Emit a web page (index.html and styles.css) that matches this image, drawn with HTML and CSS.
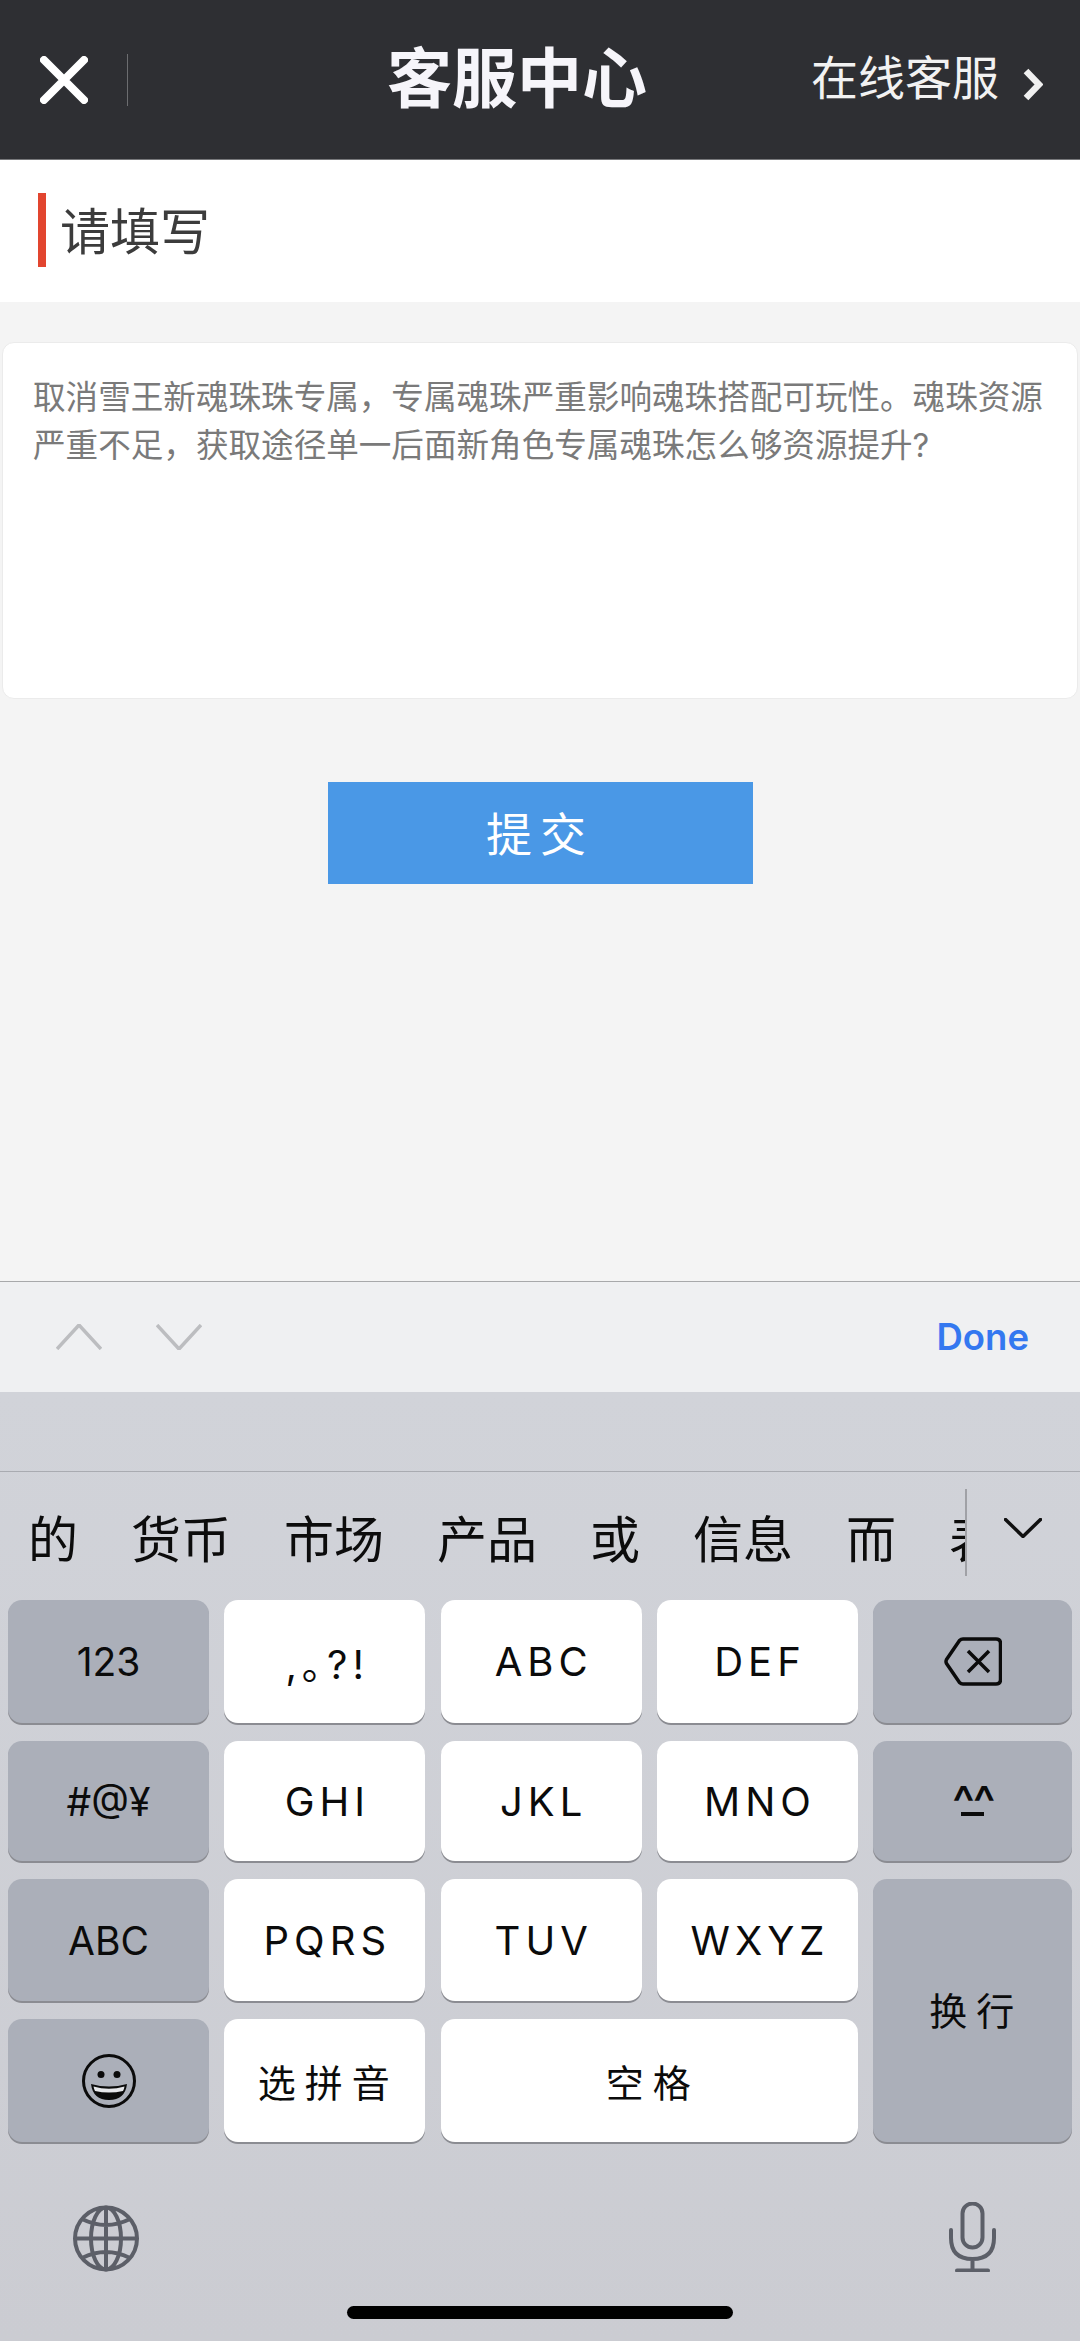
FILE: index.html
```html
<!DOCTYPE html>
<html lang="zh-CN">
<head>
    <meta charset="UTF-8">
    <meta name="viewport" content="width=device-width, initial-scale=1.0">
    <title>客服中心</title>
    <link rel="stylesheet" href="styles.css">
</head>
<body>
    <div class="page">
        <header class="topbar">
            <div class="topbar-left">
                <svg class="icon-close" viewBox="0 0 48 48"><path d="M4 4 L44 44 M44 4 L4 44"/></svg>
                <span class="topbar-divider"></span>
            </div>
            <h1 class="topbar-title">客服中心</h1>
            <div class="topbar-right">
                <span>在线客服</span>
                <svg class="icon-next" viewBox="0 0 21 33"><path d="M4 3 L17 16.5 L4 30"/></svg>
            </div>
        </header>

        <main class="content">
            <div class="section-title"><span>请填写</span></div>
            <div class="feedback-box">取消雪王新魂珠珠专属，专属魂珠严重影响魂珠搭配可玩性。魂珠资源严重不足，获取途径单一后面新角色专属魂珠怎么够资源提升?</div>
            <button class="submit-btn">提交</button>
        </main>

        <div class="form-toolbar">
            <svg class="icon-arrow" viewBox="0 0 46 26"><path d="M1 25 L23 1 L45 25"/></svg>
            <svg class="icon-arrow" viewBox="0 0 46 26"><path d="M1 1 L23 25 L45 1"/></svg>
            <span class="done">Done</span>
        </div>

        <div class="keyboard">
            <div class="pinyin-strip"></div>
            <div class="candidates">
                <div class="candidate-list">
                    <span>的</span>
                    <span>货币</span>
                    <span>市场</span>
                    <span>产品</span>
                    <span>或</span>
                    <span>信息</span>
                    <span>而</span>
                    <span>表</span>
                </div>
                <svg class="icon-more" viewBox="0 0 38 20"><path d="M1.5 1.5 L19 18.5 L36.5 1.5"/></svg>
            </div>

            <div class="keys">
                <div class="key dark num">123</div>
                <div class="key">,｡?!</div>
                <div class="key">ABC</div>
                <div class="key">DEF</div>
                <div class="key dark">
                    <svg class="icon-backspace" viewBox="0 0 58 49">
                        <path d="M19 2 H52 Q56.5 2 56.5 6.5 V42.5 Q56.5 47 52 47 H19 Q17 47 15.500 45.500 L2.500 26.500 Q1.500 24.500 2.500 22.500 L15.500 3.500 Q17 2 19 2 Z"/>
                        <path d="M24 14 L45 35 M45 14 L24 35"/>
                    </svg>
                </div>

                <div class="key dark num">#@¥</div>
                <div class="key">GHI</div>
                <div class="key">JKL</div>
                <div class="key">MNO</div>
                <div class="key dark">
                    <div class="kaomoji"><span class="kaomoji-eyes">^^</span><span class="kaomoji-mouth"></span></div>
                </div>

                <div class="key dark num">ABC</div>
                <div class="key">PQRS</div>
                <div class="key">TUV</div>
                <div class="key">WXYZ</div>
                <div class="key dark cjk key-return">换行</div>

                <div class="key dark">
                    <svg class="icon-emoji" viewBox="0 0 54 54">
                        <circle class="face" cx="27" cy="27" r="25.500"/>
                        <circle class="eye" cx="19" cy="20.500" r="3.500"/>
                        <circle class="eye" cx="35" cy="20.500" r="3.500"/>
                        <path class="mouth" d="M9 30 Q27 35 45 30 Q43 46 27 46 Q11 46 9 30 Z"/>
                        <path class="teeth" d="M11.500 32.500 Q27 37 42.500 32.500 Q42 35.500 41 37 Q27 40 13 37 Q12 35 11.500 32.500 Z"/>
                    </svg>
                </div>
                <div class="key cjk">选拼音</div>
                <div class="key cjk key-space">空格</div>
            </div>

            <div class="kb-bottom">
                <svg class="icon-globe" viewBox="0 0 66 67">
                    <circle cx="33" cy="33.500" r="31"/>
                    <ellipse cx="33" cy="33.500" rx="15" ry="31"/>
                    <path d="M33 2.500 V64.500 M2 33.500 H64 M9 14 Q33 26 57 14 M9 53 Q33 41 57 53"/>
                </svg>
                <svg class="icon-mic" viewBox="0 0 47 70">
                    <rect x="13.500" y="1.500" width="20" height="44" rx="10"/>
                    <path d="M2 28 V36 Q2 57 23.500 57 Q45 57 45 36 V28 M23.500 57 V68 M8 68.500 H39"/>
                </svg>
            </div>
            <div class="home-bar"></div>
        </div>
    </div>
</body>
</html>
```

FILE: styles.css
```css
/* General Styles */
* {
    box-sizing: border-box;
}

body {
    margin: 0;
    padding: 0;
    font-family: Inter, "Noto Sans CJK SC", sans-serif;
    background: #f4f4f4;
}

.page {
    display: flex;
    flex-direction: column;
    width: 1080px;
    height: 2341px;
    overflow: hidden;
}

/* Top bar */
.topbar {
    display: flex;
    align-items: center;
    flex-shrink: 0;
    height: 160px;
    padding-right: 37px;
    background: #2e2f33;
    border-bottom: 1px solid #77787b;
    color: #fff;
}

.topbar-left {
    display: flex;
    align-items: center;
    width: 387px;
    padding-left: 40px;
}

.icon-close {
    width: 48px;
    height: 48px;
    fill: none;
    stroke: #fff;
    stroke-width: 8;
    stroke-linecap: round;
}

.topbar-divider {
    width: 1px;
    height: 52px;
    margin-left: 39px;
    background: #6c6d70;
}

.topbar-title {
    margin: 0 0 3px;
    font-size: 65px;
    font-weight: 700;
    line-height: 1;
    color: #f6f5fa;
}

.topbar-right {
    display: flex;
    align-items: center;
    gap: 23px;
    margin-left: auto;
    margin-bottom: 10px;
    font-size: 47px;
    color: #f2f2f2;
}

.icon-next {
    width: 21px;
    height: 33px;
    margin-top: 20px;
    fill: none;
    stroke: #f0f0f0;
    stroke-width: 6.500;
}

/* Form */
.content {
    display: flex;
    flex-direction: column;
    flex: 1;
}

.section-title {
    display: flex;
    align-items: center;
    flex-shrink: 0;
    height: 142px;
    padding: 0 0 2px 38px;
    background: #fff;
    font-size: 50px;
    color: #3c3c3c;
}

.section-title::before {
    content: "";
    width: 8px;
    height: 74px;
    margin-right: 14px;
    background: #e2452f;
}

.section-title span {
    margin-bottom: 4px;
}

.feedback-box {
    height: 357px;
    margin: 40px 2px 0;
    padding: 30px 30px;
    background: #fff;
    border: 1px solid #ebebeb;
    border-radius: 12px;
    font-size: 32.600px;
    line-height: 48px;
    color: #7a7a7a;
}

.submit-btn {
    width: 425px;
    height: 102px;
    margin: 83px auto 0;
    padding: 0 0 4px;
    background: #4a98e6;
    border: none;
    font-family: inherit;
    font-size: 46px;
    letter-spacing: 8px;
    color: #fff;
}

/* Toolbar above the keyboard */
.form-toolbar {
    display: flex;
    align-items: center;
    flex-shrink: 0;
    gap: 54px;
    height: 111px;
    padding: 0 51px 0 56px;
    background: #eff0f2;
    border-top: 1px solid #a8a9ab;
}

.icon-arrow {
    width: 46px;
    height: 26px;
    margin-bottom: 1px;
    fill: none;
    stroke: #bcbdc0;
    stroke-width: 3.500;
}

.done {
    margin-left: auto;
    font-size: 36.500px;
    font-weight: 600;
    color: #3478f0;
}

/* Keyboard */
.keyboard {
    flex-shrink: 0;
    height: 949px;
    background: linear-gradient(#d1d3d9, #cbccd2);
}

.pinyin-strip {
    height: 79px;
    border-bottom: 1px solid #a9abb1;
    box-sizing: content-box;
}

.candidates {
    display: flex;
    align-items: center;
    height: 128px;
    padding-bottom: 8px;
}

.candidate-list {
    display: flex;
    gap: 53px;
    width: 967px;
    height: 87px;
    padding: 13px 0 0 28px;
    overflow: hidden;
    border-right: 2px solid #a0a1a6;
    font-size: 50px;
    line-height: 76px;
    color: #0c0c0c;
    white-space: nowrap;
}

.icon-more {
    width: 38px;
    height: 20px;
    margin: 0 0 8px 37px;
    fill: none;
    stroke: #111;
    stroke-width: 3.500;
    stroke-linecap: round;
}

.keys {
    display: grid;
    grid-template-columns: repeat(4, 201px) 199px;
    grid-template-rows: 123px 120px 122px 123px;
    gap: 18px 15.330px;
    padding-left: 8px;
}

.key {
    display: flex;
    align-items: center;
    justify-content: center;
    padding-left: 5px;
    background: #fff;
    border-radius: 14px;
    box-shadow: 0 2px 0 #8b8c92;
    font-size: 40px;
    letter-spacing: 5px;
    color: #0b0b0b;
}

.key.dark {
    background: #abafb9;
    padding-left: 0;
}

.key.num {
    letter-spacing: 0;
    font-size: 39px;
}

.key.cjk {
    padding-left: 7px;
    font-size: 38px;
    letter-spacing: 9px;
}

.key-return {
    grid-column: 5;
    grid-row: 3 / span 2;
    padding-bottom: 5px;
}

.key-space {
    grid-column: 3 / span 2;
}

.icon-backspace {
    width: 58px;
    height: 49px;
    fill: none;
    stroke: #0b0b0b;
    stroke-width: 3.500;
    stroke-linejoin: round;
}

.kaomoji {
    display: flex;
    flex-direction: column;
    align-items: center;
    margin-bottom: 9px;
}

.kaomoji-eyes {
    height: 30px;
    font-size: 48px;
    font-weight: 500;
    letter-spacing: -2px;
    line-height: 50px;
}

.kaomoji-mouth {
    width: 23px;
    height: 4px;
    margin-top: 4px;
    background: #0b0b0b;
}

.icon-emoji {
    width: 54px;
    height: 54px;
}

.icon-emoji .face {
    fill: none;
    stroke: #0b0b0b;
    stroke-width: 3;
}

.icon-emoji .eye,
.icon-emoji .mouth {
    fill: #0b0b0b;
}

.icon-emoji .teeth {
    fill: #e6e7ea;
}

.kb-bottom {
    display: flex;
    align-items: center;
    justify-content: space-between;
    height: 71px;
    margin-top: 59px;
    padding: 0 84px 0 73px;
}

.icon-globe {
    width: 66px;
    height: 67px;
    margin-top: 4px;
    fill: none;
    stroke: #5c5f68;
    stroke-width: 4;
}

.icon-mic {
    width: 47px;
    height: 70px;
    fill: none;
    stroke: #5c5f68;
    stroke-width: 4;
    stroke-linecap: round;
}

.home-bar {
    width: 386px;
    height: 13px;
    margin: 34px auto 0;
    background: #000;
    border-radius: 7px;
}
```
